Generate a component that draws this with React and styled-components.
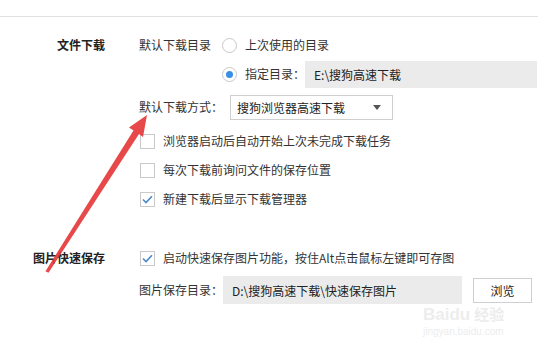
import React from 'react'
import styled, { createGlobalStyle } from 'styled-components'

const GlobalStyle = createGlobalStyle`
  html, body {
    margin: 0;
    padding: 0;
    background: #fff;
  }
  body {
    font-family: "Noto Sans CJK SC", "Microsoft YaHei", sans-serif;
    font-size: 12px;
    color: #333;
  }
`

const Page = styled.div`
  position: relative;
  width: 538px;
  height: 341px;
  overflow: hidden;
  background: #fff;
`

const TopBar = styled.div`
  height: 16px;
  border-bottom: 1px solid #e2e2e2;
`

const Section = styled.section`
  display: grid;
  grid-template-columns: 105px 1fr;
  column-gap: 34px;
  margin-top: ${(p) => p.$mt}px;
`

const SectionTitle = styled.h4`
  margin: 0;
  height: 28px;
  line-height: 28px;
  text-align: right;
  font-size: 12px;
  font-weight: bold;
  color: #222;
  white-space: nowrap;
`

const Rows = styled.div`
  display: flex;
  flex-direction: column;
`

const Row = styled.div`
  display: flex;
  align-items: center;
  height: ${(p) => p.$h || 28}px;
  margin-top: ${(p) => p.$mt || 0}px;
  padding-left: ${(p) => p.$indent || 0}px;
  white-space: nowrap;
`

const Label = styled.span`
  line-height: 1;
  margin-right: ${(p) => p.$gap || 0}px;
`

const Radio = styled.span`
  box-sizing: border-box;
  width: 15px;
  height: 15px;
  border-radius: 50%;
  border: 1px solid #c9c9c9;
  background: #fff;
  margin-right: 8px;
  display: flex;
  align-items: center;
  justify-content: center;
  flex: none;
  &::after {
    content: '';
    width: 7px;
    height: 7px;
    border-radius: 50%;
    background: ${(p) => (p.$checked ? '#3a8ee6' : 'transparent')};
  }
`

const Check = styled.span`
  box-sizing: border-box;
  width: 15px;
  height: 15px;
  border: 1px solid #c9c9c9;
  background: #fff;
  margin-left: 1px;
  margin-right: 8px;
  display: flex;
  align-items: center;
  justify-content: center;
  flex: none;
`

const PathBox = styled.div`
  box-sizing: border-box;
  width: ${(p) => p.$w}px;
  height: ${(p) => p.$h || 28}px;
  background: #ebebeb;
  display: flex;
  align-items: center;
  padding-left: 9px;
  color: #222;
  flex: none;
`

const Select = styled.div`
  box-sizing: border-box;
  width: 163px;
  height: 25px;
  margin-left: 7px;
  border: 1px solid #cfcfcf;
  background: #fff;
  display: flex;
  align-items: center;
  justify-content: space-between;
  padding: 0 11px 0 6px;
  color: #222;
`

const Caret = styled.span`
  width: 0;
  height: 0;
  border-left: 4px solid transparent;
  border-right: 4px solid transparent;
  border-top: 5px solid #555;
`

const Button = styled.button`
  box-sizing: border-box;
  width: 59px;
  height: 25px;
  margin-left: 11px;
  border: 1px solid #cfcfcf;
  background: #fff;
  font-family: inherit;
  font-size: 12px;
  color: #222;
  padding: 0;
`

const Overlay = styled.svg`
  position: absolute;
  left: 0;
  top: 0;
  pointer-events: none;
`

const Watermark = styled.div`
  position: absolute;
  left: 423px;
  top: 305px;
  color: #ededed;
  font-family: "Liberation Sans", Arial, sans-serif;
  white-space: nowrap;
  pointer-events: none;
`

const MarkLogo = styled.div`
  font-size: 17px;
  font-weight: bold;
  line-height: 17px;
  span {
    font-family: "Noto Sans CJK SC", sans-serif;
    font-size: 15px;
    margin-left: 4px;
  }
`

const MarkUrl = styled.div`
  font-size: 10px;
  line-height: 12px;
  margin-top: 3px;
`

const Tick = () => (
  <svg width="11" height="9" viewBox="0 0 11 9">
    <path d="M1 4.5 L4 7.5 L10 1.2" fill="none" stroke="#4a88c8" strokeWidth="1.6" />
  </svg>
)

const CheckRow = ({ checked, children, mt }) => (
  <Row $mt={mt}>
    <Check>{checked && <Tick />}</Check>
    <Label>{children}</Label>
  </Row>
)

const App = () => {
  return (
    <Page>
      <GlobalStyle />
      <TopBar />

      <Section $mt={14}>
        <SectionTitle>文件下载</SectionTitle>
        <Rows>
          <Row>
            <Label $gap={11}>默认下载目录</Label>
            <Radio />
            <Label>上次使用的目录</Label>
          </Row>
          <Row $mt={1} $indent={83}>
            <Radio $checked />
            <Label>指定目录：</Label>
            <PathBox $w={232} $h={27}>E:\搜狗高速下载</PathBox>
          </Row>
          <Row $mt={6} $h={26}>
            <Label>默认下载方式：</Label>
            <Select>
              <span>搜狗浏览器高速下载</span>
              <Caret />
            </Select>
          </Row>
          <CheckRow mt={7}>浏览器启动后自动开始上次未完成下载任务</CheckRow>
          <CheckRow mt={1}>每次下载前询问文件的保存位置</CheckRow>
          <CheckRow mt={1} checked>新建下载后显示下载管理器</CheckRow>
        </Rows>
      </Section>

      <Section $mt={31}>
        <SectionTitle>图片快速保存</SectionTitle>
        <Rows>
          <CheckRow checked>启动快速保存图片功能，按住Alt点击鼠标左键即可存图</CheckRow>
          <Row $mt={4}>
            <Label>图片保存目录：</Label>
            <PathBox $w={239}>D:\搜狗高速下载\快速保存图片</PathBox>
            <Button>浏览</Button>
          </Row>
        </Rows>
      </Section>

      <Watermark>
        <MarkLogo>
          Baidu<span>经验</span>
        </MarkLogo>
        <MarkUrl>jingyan.baidu.com</MarkUrl>
      </Watermark>

      <Overlay width="538" height="341" viewBox="0 0 538 341">
        <polygon
          points="147,115 143,137 139,134 48.5,272.8 45.5,271.2 133.5,130.5 129,127.5"
          fill="#e5393b"
          opacity="0.92"
        />
      </Overlay>
    </Page>
  )
}

export default App
